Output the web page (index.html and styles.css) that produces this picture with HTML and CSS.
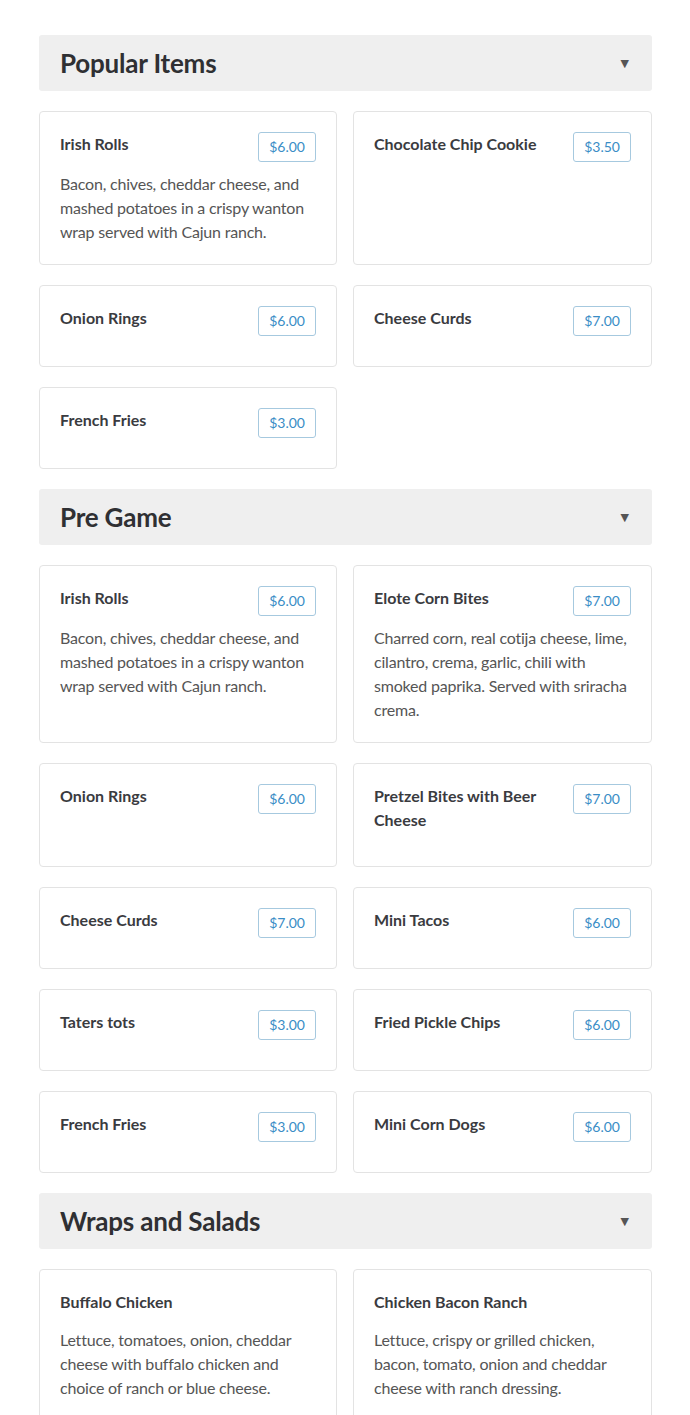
FILE: index.html
```html
<!DOCTYPE html>
<html lang="en">
<head>
<meta charset="utf-8">
<title>Menu</title>
<link rel="stylesheet" href="styles.css">
</head>
<body>
<main class="menu">
  <section class="section">
    <div class="section-header"><h2 class="section-title">Popular Items</h2><span class="caret">▼</span></div>
    <div class="grid">
      <div class="card"><div class="card-head"><h3 class="item-name">Irish Rolls</h3><span class="price">$6.00</span></div><p class="desc">Bacon, chives, cheddar cheese, and mashed potatoes in a crispy wanton wrap served with Cajun ranch.</p></div>
      <div class="card"><div class="card-head"><h3 class="item-name">Chocolate Chip Cookie</h3><span class="price">$3.50</span></div></div>
      <div class="card"><div class="card-head"><h3 class="item-name">Onion Rings</h3><span class="price">$6.00</span></div></div>
      <div class="card"><div class="card-head"><h3 class="item-name">Cheese Curds</h3><span class="price">$7.00</span></div></div>
      <div class="card"><div class="card-head"><h3 class="item-name">French Fries</h3><span class="price">$3.00</span></div></div>
    </div>
  </section>
  <section class="section">
    <div class="section-header"><h2 class="section-title">Pre Game</h2><span class="caret">▼</span></div>
    <div class="grid">
      <div class="card"><div class="card-head"><h3 class="item-name">Irish Rolls</h3><span class="price">$6.00</span></div><p class="desc">Bacon, chives, cheddar cheese, and mashed potatoes in a crispy wanton wrap served with Cajun ranch.</p></div>
      <div class="card"><div class="card-head"><h3 class="item-name">Elote Corn Bites</h3><span class="price">$7.00</span></div><p class="desc">Charred corn, real cotija cheese, lime, cilantro, crema, garlic, chili with smoked paprika. Served with sriracha crema.</p></div>
      <div class="card"><div class="card-head"><h3 class="item-name">Onion Rings</h3><span class="price">$6.00</span></div></div>
      <div class="card"><div class="card-head"><h3 class="item-name">Pretzel Bites with Beer Cheese</h3><span class="price">$7.00</span></div></div>
      <div class="card"><div class="card-head"><h3 class="item-name">Cheese Curds</h3><span class="price">$7.00</span></div></div>
      <div class="card"><div class="card-head"><h3 class="item-name">Mini Tacos</h3><span class="price">$6.00</span></div></div>
      <div class="card"><div class="card-head"><h3 class="item-name">Taters tots</h3><span class="price">$3.00</span></div></div>
      <div class="card"><div class="card-head"><h3 class="item-name">Fried Pickle Chips</h3><span class="price">$6.00</span></div></div>
      <div class="card"><div class="card-head"><h3 class="item-name">French Fries</h3><span class="price">$3.00</span></div></div>
      <div class="card"><div class="card-head"><h3 class="item-name">Mini Corn Dogs</h3><span class="price">$6.00</span></div></div>
    </div>
  </section>
  <section class="section">
    <div class="section-header"><h2 class="section-title">Wraps and Salads</h2><span class="caret">▼</span></div>
    <div class="grid">
      <div class="card"><div class="card-head"><h3 class="item-name">Buffalo Chicken</h3></div><p class="desc">Lettuce, tomatoes, onion, cheddar cheese with buffalo chicken and choice of ranch or blue cheese.</p></div>
      <div class="card"><div class="card-head"><h3 class="item-name">Chicken Bacon Ranch</h3></div><p class="desc">Lettuce, crispy or grilled chicken, bacon, tomato, onion and cheddar cheese with ranch dressing.</p></div>
    </div>
  </section>
</main>
</body>
</html>
```

FILE: styles.css
```css
* { box-sizing: border-box; }
html, body { margin: 0; padding: 0; background: #fff; }
body {
  font-family: Lato, "Open Sans", "Liberation Sans", sans-serif;
  color: #333;
}
.menu {
  padding: 35px 38px 40px 39px;
}
.section { margin-bottom: 20px; }
.section-header {
  display: flex;
  align-items: center;
  justify-content: space-between;
  height: 56px;
  padding: 0 23px 0 21px;
  background: #efefef;
  border-radius: 3px;
  margin-bottom: 20px;
}
.section-title {
  margin: 0;
  font-size: 26px;
  font-weight: 700;
  letter-spacing: -0.2px;
  color: #2f3033;
  line-height: 1;
}
.caret {
  font-size: 11px;
  color: #555;
  line-height: 1;
  font-family: "DejaVu Sans", sans-serif;
}
.grid {
  display: grid;
  grid-template-columns: 298px 1fr;
  gap: 20px 16px;
}
.card {
  border: 1px solid #e3e3e3;
  border-radius: 4px;
  padding: 20px;
  background: #fff;
}
.card-head {
  display: flex;
  justify-content: space-between;
  align-items: flex-start;
  gap: 20px;
  margin-bottom: 10px;
}
.item-name {
  margin: 0;
  padding-bottom: 4px;
  font-size: 16px;
  line-height: 24px;
  font-weight: 700;
  color: #3a3b3f;
}
.price {
  flex: none;
  height: 30px;
  padding: 0 10px;
  border: 1px solid #a6c9df;
  border-radius: 3px;
  font-size: 14px;
  line-height: 28px;
  color: #3a8dc6;
}
.desc {
  margin: 0;
  font-size: 16px;
  line-height: 24px;
  letter-spacing: -0.2px;
  color: #555;
}
```
